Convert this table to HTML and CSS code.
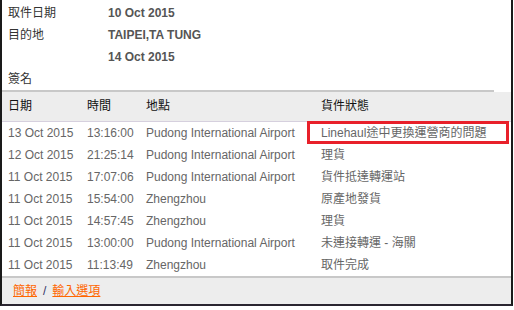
FILE: index.html
```html
<!DOCTYPE html>
<html>
<head>
<meta charset="utf-8">
<link rel="stylesheet" href="styles.css">
</head>
<body>
<div class="frame">
  <div class="info">
    <div class="info-row"><span class="label">取件日期</span><span class="value">10 Oct 2015</span></div>
    <div class="info-row"><span class="label">目的地</span><span class="value">TAIPEI,TA TUNG</span></div>
    <div class="info-row"><span class="label"></span><span class="value">14 Oct 2015</span></div>
    <div class="info-row"><span class="label">簽名</span><span class="value"></span></div>
  </div>
  <table class="events">
    <thead>
      <tr><th class="c-date">日期</th><th class="c-time">時間</th><th class="c-loc">地點</th><th class="c-status">貨件狀態</th></tr>
    </thead>
    <tbody>
      <tr><td>13 Oct 2015</td><td>13:16:00</td><td>Pudong International Airport</td><td class="highlight">Linehaul途中更換運營商的問題</td></tr>
      <tr><td>12 Oct 2015</td><td>21:25:14</td><td>Pudong International Airport</td><td>理貨</td></tr>
      <tr><td>11 Oct 2015</td><td>17:07:06</td><td>Pudong International Airport</td><td>貨件抵達轉運站</td></tr>
      <tr><td>11 Oct 2015</td><td>15:54:00</td><td>Zhengzhou</td><td>原產地發貨</td></tr>
      <tr><td>11 Oct 2015</td><td>14:57:45</td><td>Zhengzhou</td><td>理貨</td></tr>
      <tr><td>11 Oct 2015</td><td>13:00:00</td><td>Pudong International Airport</td><td>未連接轉運 - 海關</td></tr>
      <tr><td>11 Oct 2015</td><td>11:13:49</td><td>Zhengzhou</td><td>取件完成</td></tr>
    </tbody>
  </table>
  <div class="footer">
    <a class="link" href="#">簡報</a><span class="sep">/</span><a class="link" href="#">輸入選項</a>
  </div>
</div>
</body>
</html>
```
FILE: styles.css
```css
html, body {
  margin: 0;
  padding: 0;
  background: #ffffff;
}
body {
  font-family: "Liberation Sans", Arial, "Noto Sans CJK TC", sans-serif;
  font-size: 12px;
  line-height: 15px;
}
.frame {
  width: 513px;
  box-sizing: border-box;
  border-left: 2px solid #1a1a1a;
  border-right: 2px solid #1a1a1a;
  border-bottom: 2px solid #2a2530;
}
.info {
  padding-top: 2px;
  margin-right: 17px;
  border-bottom: 2px solid #c8c8c8;
}
.info-row {
  display: flex;
  height: 22px;
  align-items: center;
}
.label {
  width: 100px;
  padding-left: 6px;
  color: #333333;
}
.value {
  font-weight: bold;
  color: #555555;
}
.events {
  width: 100%;
  border-collapse: collapse;
  table-layout: fixed;
}
.events th {
  background: #ededed;
  height: 29px;
  padding: 0 0 0 6px;
  text-align: left;
  font-weight: normal;
  color: #111111;
  border-bottom: 1px solid #d6d0de;
}
.c-date { width: 73px; }
.c-time { width: 53px; }
.c-loc { width: 169px; }
.events td {
  height: 22px;
  padding: 0 0 0 6px;
  color: #666666;
  white-space: nowrap;
}
.events td.highlight {
  position: relative;
}
.events td.highlight::after {
  content: "";
  position: absolute;
  top: -1px;
  bottom: 0;
  left: -8px;
  right: 2px;
  border: 3px solid #e8202a;
}
.footer {
  background: #ededed;
  border-top: 2px solid #c8c8c8;
  height: 26px;
  display: flex;
  align-items: center;
  padding-left: 11px;
}
.link {
  color: #ff6600;
  text-decoration: underline;
}
.sep {
  color: #333366;
  margin: 0 6px;
}
```
